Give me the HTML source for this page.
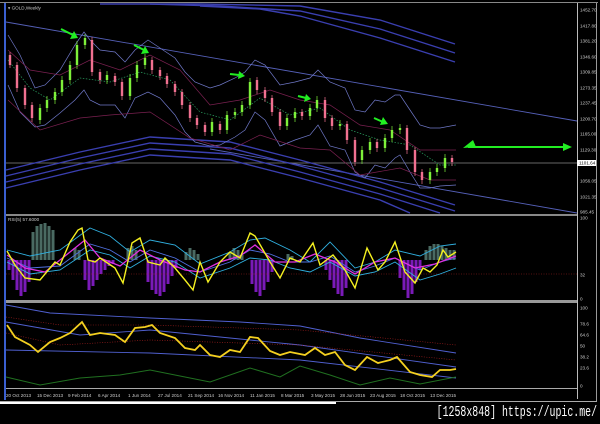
<!DOCTYPE html><html><head><meta charset="utf-8"><style>
html,body{margin:0;padding:0;background:#000;width:600px;height:424px;overflow:hidden}
svg{position:absolute;left:0;top:0}
.t{font-family:"Liberation Sans",sans-serif;font-size:4.6px;fill:#ccc}
.b{position:absolute;right:3px;top:404px;font-family:"Liberation Mono",monospace;font-size:15px;color:#fff;transform:scaleX(0.66);transform-origin:right top;white-space:nowrap}
</style></head><body>
<svg width="600" height="424" viewBox="0 0 600 424" xmlns="http://www.w3.org/2000/svg">
<rect width="600" height="424" fill="#000"/>
<rect x="0" y="2" width="598" height="1" fill="#888"/>
<rect x="4" y="3" width="2" height="397" fill="#3a5fd0"/>
<rect x="577" y="3" width="1" height="396" fill="#bbb"/>
<rect x="596" y="3" width="1" height="399" fill="#999"/>
<rect x="6" y="214" width="571" height="2" fill="#888"/>
<rect x="6" y="300" width="571" height="3" fill="#999"/>
<rect x="6" y="388" width="571" height="1" fill="#aaa"/>
<rect x="0" y="401" width="597" height="1" fill="#aaa"/>
<rect x="0" y="402" width="336" height="2" fill="#fff"/>

<line x1="6" y1="22" x2="577" y2="121" stroke="#5560b8" stroke-width="0.9"/>
<line x1="210" y1="149" x2="577" y2="213" stroke="#5560b8" stroke-width="0.9"/>
<line x1="6" y1="163" x2="577" y2="163" stroke="#888" stroke-width="0.7"/>
<g fill="none" stroke="#3a3fb0" stroke-width="1.4">
<polyline points="100,4 200,4 300,6 380,20 455,44"/>
<polyline points="150,4 220,6 300,11 380,29 455,53"/>
<polyline points="200,6 260,9 300,16 380,38 455,62"/>
<polyline points="6,170 80,152 150,137 230,142 300,160 380,182 455,205"/>
<polyline points="6,176 80,158 150,143 230,148 300,166 380,188 455,211"/>
<polyline points="6,182 80,164 150,149 230,154 300,172 380,194 440,213"/>
<polyline points="6,188 80,170 150,155 230,160 300,178 380,200 410,213"/>
</g>
<g fill="none" stroke-width="0.7">
<polyline stroke="#6f78c8" points="8,35 20,55 35,88 45,85 60,70 75,45 84,32 90,40 100,50 115,52 125,62 135,50 148,40 160,48 175,58 185,72 195,82 210,88 220,85 235,78 245,72 255,60 265,65 280,85 295,82 310,78 318,70 330,82 345,88 355,110 365,112 375,100 385,102 395,95 400,95 410,110 420,125 430,128 440,128 456,125"/>
<polyline stroke="#6f78c8" points="8,85 20,112 35,127 45,125 60,113 75,100 84,90 90,100 100,105 115,105 125,118 135,98 148,92 160,98 175,115 185,132 195,142 210,146 220,145 235,137 245,130 255,112 265,120 280,146 295,140 310,135 318,125 330,146 345,150 355,172 365,178 375,165 385,168 395,158 400,155 410,172 420,188 430,188 440,186 456,185"/>
<polyline stroke="#7a2050" points="8,50 30,70 60,75 90,60 120,70 150,55 180,70 210,105 240,100 270,90 300,100 330,105 360,125 390,130 420,150 456,150"/>
<polyline stroke="#7a2050" points="8,100 40,130 80,118 110,115 150,112 190,138 230,150 260,135 300,148 330,150 360,175 400,168 430,180 456,180"/>
<polyline stroke="#2aa060" stroke-dasharray="1.5,1.5" points="8,60 30,88 50,100 80,78 110,82 140,72 170,80 200,112 230,120 260,98 290,115 320,108 350,130 380,140 410,145 440,165 456,165"/>
</g>
<path stroke="#f07090" stroke-width="0.7" fill="none" d="M10 52V68M17 62V92M25 85V109M32 102V122M92 37V76M100 69V84M115 73V86M122 79V100M152 57V74M160 67V80M167 73V88M175 81V96M182 89V109M190 102V122M197 115V129M205 122V136M220 121V134M257 77V94M265 87V102M272 95V116M280 109V130M302 109V120M325 97V122M332 115V130M347 121V144M355 137V166M377 139V152M407 125V154M415 147V176M422 169V184M452 155V166"/>
<path stroke="#f07090" stroke-width="2.4" fill="none" d="M10 55V65M17 65V88M25 88V105M32 105V118M92 40V72M100 72V80M115 76V82M122 82V96M152 60V70M160 70V76M167 76V84M175 84V92M182 92V105M190 105V118M197 118V125M205 125V132M220 124V130M257 80V90M265 90V98M272 98V112M280 112V126M302 112V116M325 100V118M332 118V126M347 124V140M355 140V162M377 142V148M407 128V150M415 150V172M422 172V180M452 158V162"/>
<path stroke="#7ef03a" stroke-width="0.7" fill="none" d="M40 104V124M47 96V112M55 88V104M62 76V96M70 61V84M77 41V69M85 34V49M107 71V84M130 74V100M137 61V82M145 54V69M212 118V136M227 111V134M235 108V119M242 101V116M250 78V109M287 114V130M295 108V122M310 104V120M317 96V112M340 120V130M362 146V164M370 138V154M385 134V152M392 126V142M400 124V134M430 168V184M437 164V176M445 154V172"/>
<path stroke="#7ef03a" stroke-width="2.4" fill="none" d="M40 108V120M47 100V108M55 92V100M62 80V92M70 65V80M77 45V65M85 38V45M107 75V80M130 78V96M137 65V78M145 58V65M212 122V132M227 115V130M235 112V115M242 105V112M250 82V105M287 118V126M295 112V118M310 108V116M317 100V108M340 124V126M362 150V160M370 142V150M385 138V148M392 130V138M400 128V130M430 172V180M437 168V172M445 158V168"/>
<g fill="#22ee22" stroke="#22ee22" stroke-width="2">
<line x1="61" y1="29" x2="73" y2="35"/><polygon stroke="none" points="78,38 70,39 74,31"/>
<line x1="134" y1="45" x2="144" y2="50"/><polygon stroke="none" points="149,53 141,54 145,46"/>
<line x1="230" y1="74" x2="239" y2="75"/><polygon stroke="none" points="245,76 238,79 239,71"/>
<line x1="298" y1="96" x2="306" y2="98"/><polygon stroke="none" points="311,99 304,102 306,94"/>
<line x1="374" y1="118" x2="383" y2="122"/><polygon stroke="none" points="388,124 380,125 383,117"/>
<polygon stroke="none" points="463,148 473,140 476,147"/>
<line x1="468" y1="147" x2="563" y2="147"/><polygon stroke="none" points="572,147 563,143 563,151"/>
</g>

<path stroke="#4a6a62" stroke-width="3" fill="none" d="M33 260V232M37 260V226M41 260V224M45 260V223M49 260V226M53 260V230M75 260V248M79 260V250M128 260V248M132 260V246M136 260V250M186 260V252M190 260V248M194 260V250M198 260V254M230 260V252M234 260V248M238 260V250M242 260V255M288 260V254M292 260V256M426 260V250M430 260V246M434 260V244M438 260V244M442 260V246M446 260V248M450 260V250M454 260V250"/>
<path stroke="#7a1ab8" stroke-width="3" fill="none" d="M9 260V270M13 260V280M17 260V290M21 260V296M25 260V292M29 260V282M85 260V280M89 260V290M93 260V286M97 260V280M101 260V274M105 260V270M109 260V266M113 260V264M148 260V282M152 260V290M156 260V294M160 260V296M164 260V292M168 260V284M172 260V276M176 260V268M252 260V284M256 260V292M260 260V296M264 260V290M268 260V282M272 260V272M326 260V270M330 260V280M334 260V288M338 260V294M342 260V296M346 260V288M400 260V278M404 260V290M408 260V298M412 260V294M416 260V282M420 260V270"/>
<line x1="6" y1="274" x2="577" y2="274" stroke="#aa2020" stroke-width="0.6" stroke-dasharray="1,1.5"/>
<g fill="none">
<polyline stroke="#30b0e0" stroke-width="0.9" points="7,250 30,256 60,250 90,228 110,236 130,252 150,240 175,245 200,264 230,252 250,240 265,238 290,250 310,262 330,242 355,268 375,262 395,250 420,256 440,246 456,244"/>
<polyline stroke="#30b0e0" stroke-width="0.9" points="7,262 30,274 60,270 90,250 110,255 130,268 150,256 175,262 200,278 230,268 250,258 270,260 290,268 310,272 330,262 355,276 375,272 395,262 420,280 440,274 456,268"/>
<polyline stroke="#5070e0" stroke-width="0.9" points="7,258 30,268 60,266 90,244 110,250 130,262 150,250 175,258 200,272 230,262 250,250 270,254 290,262 310,262 330,256 355,272 375,266 395,258 420,270 440,262 456,258"/>
<polyline stroke="#e030e0" stroke-width="1.3" points="7,255 25,268 45,272 70,252 85,240 100,258 120,266 140,250 160,260 185,270 200,272 220,262 240,256 255,245 275,262 295,262 315,254 335,262 355,274 375,262 395,258 415,268 435,264 456,256"/>
<polyline stroke="#f4f020" stroke-width="1.4" points="7,251 15,265 25,278 40,280 55,262 60,265 70,242 78,230 82,228 88,260 95,262 100,258 115,268 123,283 132,243 140,238 148,262 160,265 165,258 175,268 185,280 193,290 200,262 208,282 220,262 230,252 240,258 250,233 255,236 262,248 270,262 280,278 290,258 300,262 313,243 320,265 333,255 345,270 355,288 367,248 378,270 385,262 395,242 405,272 415,283 423,268 430,272 437,265 443,250 448,257 456,252"/>
</g>

<g fill="none">
<polyline stroke="#5060d0" stroke-width="0.9" points="6,350 150,353 300,360 456,378"/>
<polyline stroke="#5060d0" stroke-width="0.9" points="6,322 80,335 150,330 300,345 456,367"/>
<polyline stroke="#5060d0" stroke-width="0.9" points="6,305 50,313 150,318 240,322 300,326 360,338 456,353"/>
<polyline stroke="#b02020" stroke-width="0.6" stroke-dasharray="1,1.5" points="6,333 60,345 150,340 300,345 456,360"/>
<polyline stroke="#b02020" stroke-width="0.6" stroke-dasharray="1,1.5" points="6,317 60,325 150,325 300,330 456,345"/>
<polyline stroke="#207020" stroke-width="1" points="6,377 40,385 80,378 120,375 150,370 180,376 210,382 250,368 280,377 300,366 330,375 360,385 390,378 420,384 456,377"/>
<polyline stroke="#f4d020" stroke-width="1.8" points="7,325 15,337 30,345 38,352 50,342 60,338 70,333 82,322 90,335 100,333 115,335 125,342 135,328 145,327 152,325 160,333 175,338 185,348 195,350 200,345 210,355 220,357 230,350 240,352 250,337 258,338 270,351 280,355 290,352 305,355 315,348 325,355 335,352 345,365 355,370 367,357 378,363 390,360 397,357 410,372 420,375 432,377 440,370 450,370 456,369"/>
</g>

<g class="t">
<text class="t" x="580" y="11.5">1452.70</text><text class="t" x="580" y="27.5">1417.80</text><text class="t" x="580" y="42.5">1381.20</text><text class="t" x="580" y="58.5">1346.60</text><text class="t" x="580" y="73.5">1309.85</text><text class="t" x="580" y="89.5">1273.35</text><text class="t" x="580" y="104.5">1237.45</text><text class="t" x="580" y="120.5">1200.70</text><text class="t" x="580" y="135.5">1165.00</text><text class="t" x="580" y="151.5">1129.30</text><text class="t" x="580" y="182.5">1056.05</text><text class="t" x="580" y="198.5">1021.35</text><text class="t" x="580" y="213.5">985.45</text>
<text class="t" x="580" y="219.5">100</text><text class="t" x="580" y="276.5">32</text><text class="t" x="580" y="300.5">0</text>
<text class="t" x="580" y="309.5">100</text><text class="t" x="580" y="325.5">78.6</text><text class="t" x="580" y="336.5">64.6</text><text class="t" x="580" y="347.5">50</text><text class="t" x="580" y="358.5">38.2</text><text class="t" x="580" y="369.5">23.6</text><text class="t" x="580" y="387.5">0</text>
<text class="t" x="8" y="9.5">▾ GOLD,Weekly</text><text class="t" x="8" y="221">RSI(5) 57.6000</text>
<text class="t" x="6" y="397">20 Oct 2013</text><text class="t" x="37" y="397">15 Dec 2013</text><text class="t" x="68" y="397">9 Feb 2014</text><text class="t" x="98" y="397">6 Apr 2014</text><text class="t" x="128" y="397">1 Jun 2014</text><text class="t" x="158" y="397">27 Jul 2014</text><text class="t" x="188" y="397">21 Sep 2014</text><text class="t" x="218" y="397">16 Nov 2014</text><text class="t" x="250" y="397">11 Jan 2015</text><text class="t" x="281" y="397">8 Mar 2015</text><text class="t" x="311" y="397">3 May 2015</text><text class="t" x="340" y="397">28 Jun 2015</text><text class="t" x="370" y="397">23 Aug 2015</text><text class="t" x="400" y="397">18 Oct 2015</text><text class="t" x="430" y="397">13 Dec 2015</text>
</g>
<rect x="577" y="160" width="19" height="6" fill="#fff"/><text x="579" y="164.7" style="font-family:'Liberation Sans';font-size:4.6px;fill:#000">1101.64</text>
</svg>
<div class="b">[1258x848] https://upic.me/</div>
</body></html>
